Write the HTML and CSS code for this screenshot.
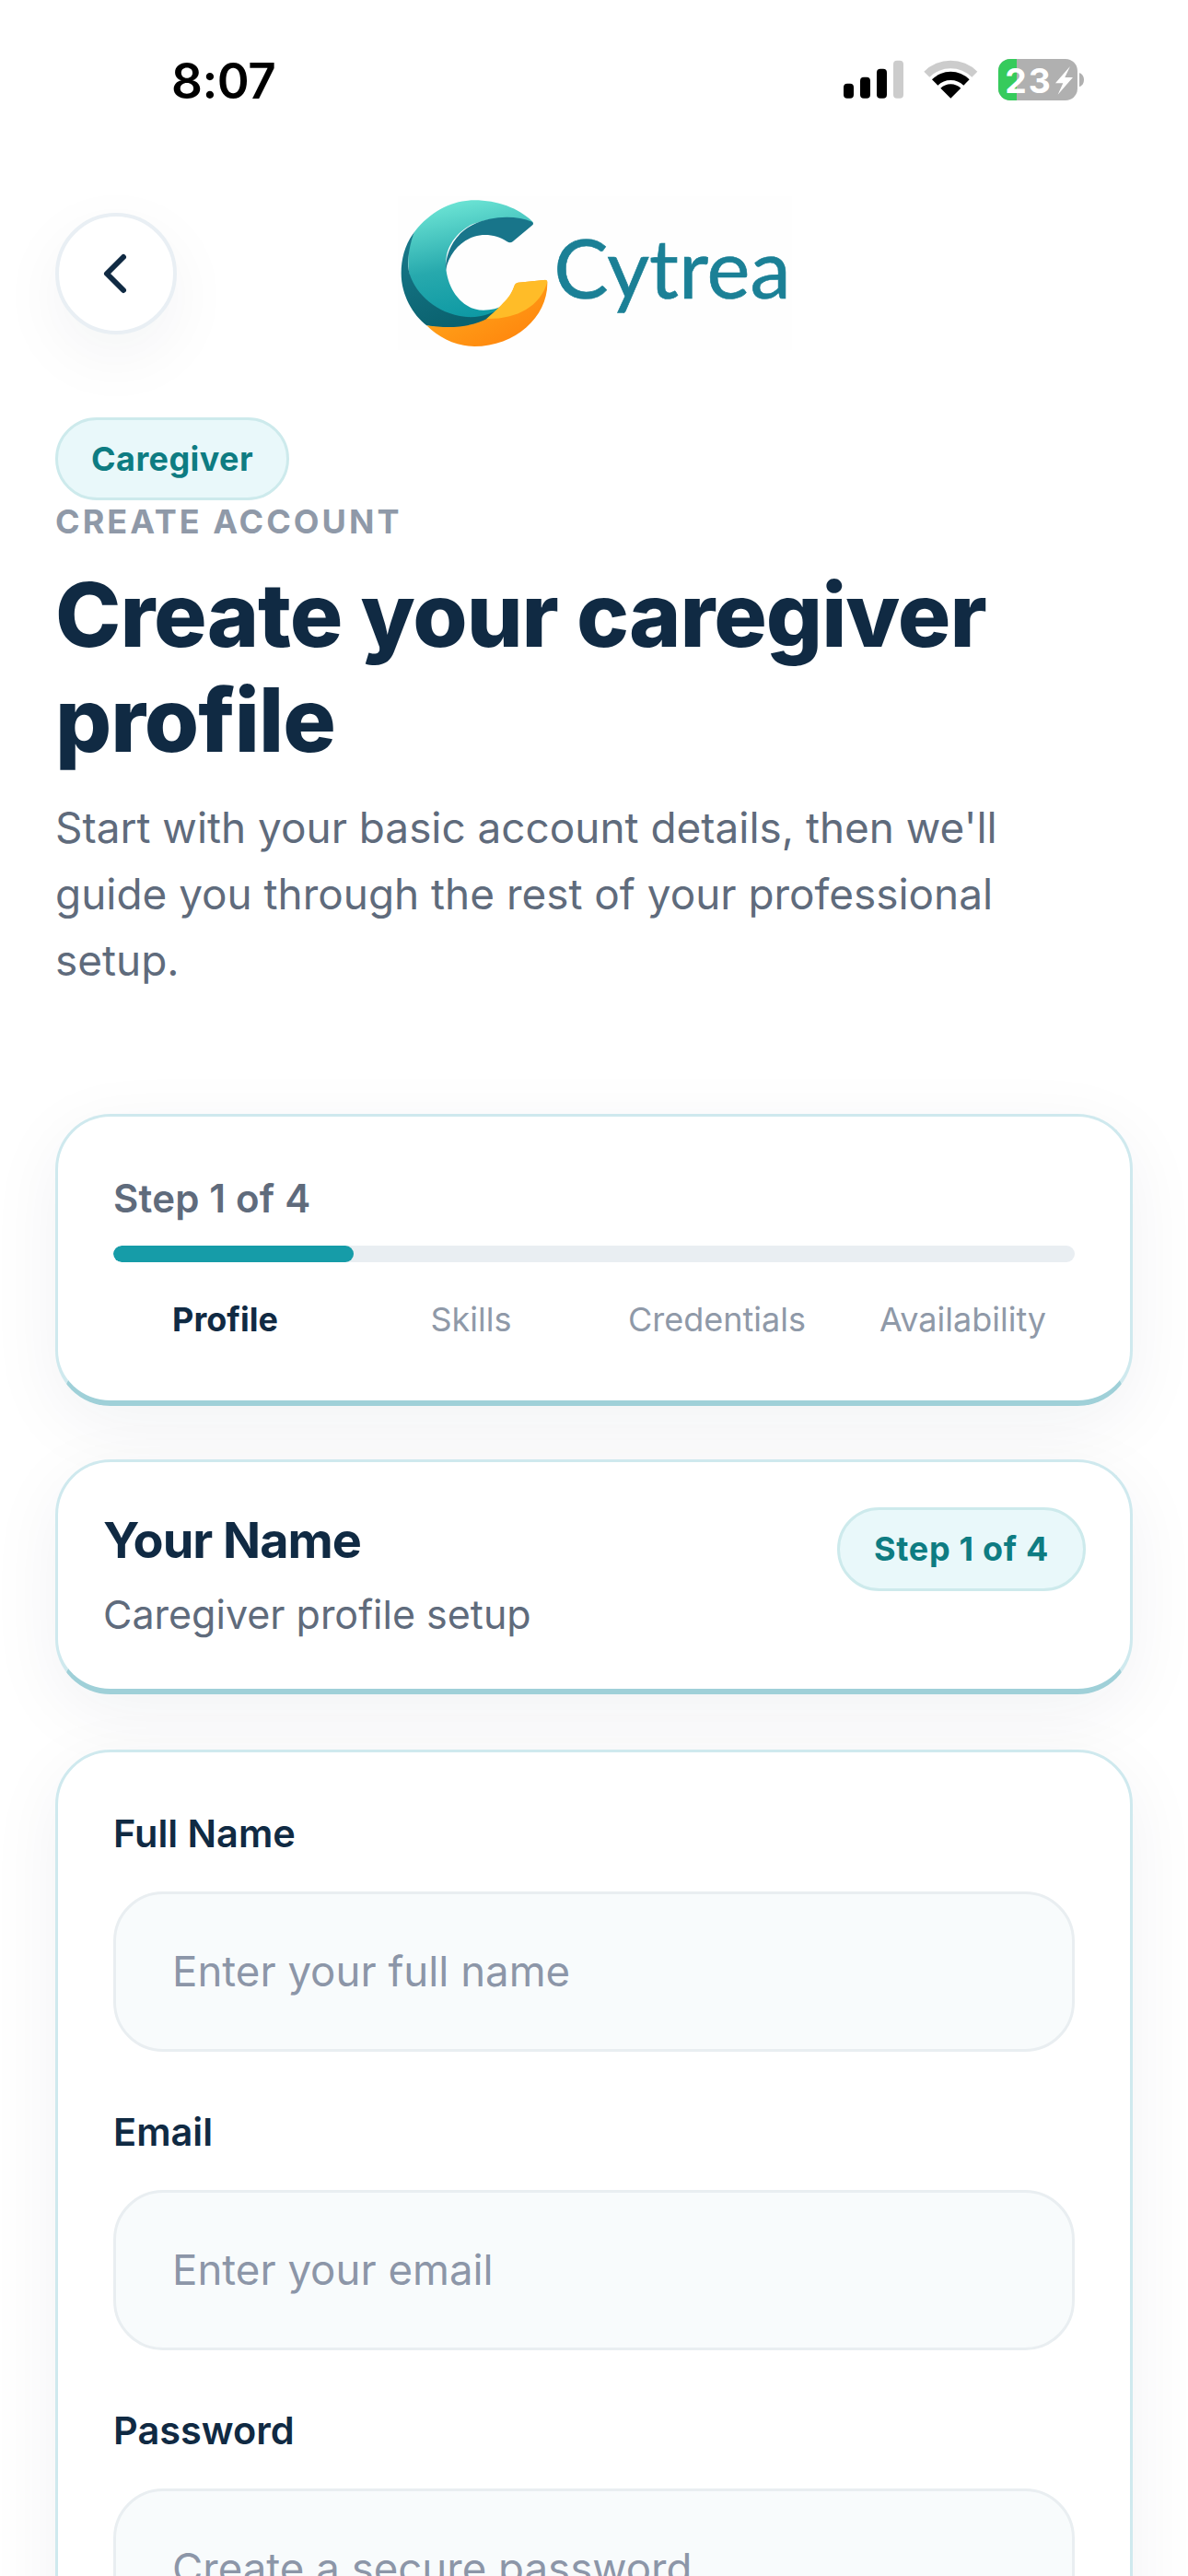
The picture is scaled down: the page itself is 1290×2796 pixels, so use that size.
FILE: index.html
```html
<!DOCTYPE html>
<html lang="en">
<head>
<meta charset="utf-8">
<title>Cytrea - Create your caregiver profile</title>
<link rel="stylesheet" href="styles.css">
</head>
<body>
<div class="screen">
  <div class="status">
    <span class="time">8:07</span>
    <svg class="status-icons" viewBox="0 0 320 90" width="320" height="90">
      <g transform="scale(.3333)">
        <rect x="108" y="152" width="33" height="48" rx="12" fill="#000"/>
        <rect x="162" y="131" width="33" height="69" rx="12" fill="#000"/>
        <rect x="216" y="104" width="33" height="96" rx="12" fill="#000"/>
        <rect x="270" y="77" width="33" height="123" rx="12" fill="#ccc"/>
        <path d="M370 113A123 123 0 0 1 544 113L526 131A98 98 0 0 0 388 131Z" fill="#ccc"/>
        <path d="M396 139A86 86 0 0 1 518 139L499 158A60 60 0 0 0 415 158Z" fill="#000"/>
        <path d="M424 167A47 47 0 0 1 490 167L457 200Z" fill="#000"/>
        <rect x="612" y="72" width="258" height="135" rx="39" fill="#b0b0b0"/>
        <path d="M651 72H672V207H651A39 39 0 0 1 612 168V111A39 39 0 0 1 651 72Z" fill="#36cb5c"/>
        <path d="M876 118C886 120 891 130 891 140C891 150 886 160 876 162Z" fill="#b0b0b0"/>
        <text x="634" y="182" class="batt">23</text>
        <path d="M846 96L798 151H823L806 188L855 132H829Z" fill="#fff"/>
      </g>
    </svg>
  </div>

  <header class="top">
    <button class="back" aria-label="Back">
      <svg viewBox="0 0 48 48" width="48" height="48"><path d="M32 6L14 24L32 42" fill="none" stroke="#102a43" stroke-width="6" stroke-linecap="round" stroke-linejoin="round"/></svg>
    </button>
    <svg class="logo" viewBox="15 0 1440 600" width="480" height="200">
      <defs>
        <linearGradient id="tealG" x1="0.35" y1="0" x2="0.55" y2="1">
          <stop offset="0" stop-color="#6de5d5"/>
          <stop offset=".55" stop-color="#27a9ad"/>
          <stop offset="1" stop-color="#0c98a3"/>
        </linearGradient>
        <linearGradient id="darkG" x1="0" y1="0" x2="0.4" y2="1">
          <stop offset="0" stop-color="#1a7a8c"/>
          <stop offset="1" stop-color="#0a626f"/>
        </linearGradient>
        <linearGradient id="orangeG" x1="0" y1="0" x2="1" y2="1">
          <stop offset="0" stop-color="#ffb020"/>
          <stop offset="1" stop-color="#ff7f0a"/>
        </linearGradient>
      </defs>
      <rect x="95" y="70" width="1285" height="500" fill="#fefefe"/>
      <path d="M150 185C205 115 275 82 345 82C420 82 490 108 533 150Q540 157 533 162C480 135 400 135 340 160C300 178 265 215 255 260C240 340 290 440 375 440C400 440 425 435 445 420L385 470C300 480 250 460 200 425C160 395 130 345 130 290C128 250 135 215 150 185Z" fill="url(#tealG)"/>
      <path d="M533 152Q541 158 533 164L470 217Q462 223 452 217C420 195 380 190 345 200C300 215 262 255 252 310C250 260 275 195 340 162C400 132 480 130 533 152Z" fill="#18758a"/>
      <path d="M150 185C120 225 107 270 107 320C107 390 145 455 190 490C250 505 330 505 385 470L440 425C400 460 330 475 265 450C180 420 120 340 130 270C133 240 140 210 150 185Z" fill="url(#darkG)"/>
      <path d="M190 490C230 530 285 558 345 558C480 558 585 460 583 350Q583 340 572 342L488 350Q478 352 475 362C465 390 450 410 440 425C400 470 330 510 190 490Z" fill="url(#orangeG)"/>
      <path d="M583 348Q583 340 572 342L488 350Q478 352 475 362C465 390 450 410 385 468C480 470 560 430 583 348Z" fill="#ffbc28"/>
      <text x="604" y="402" class="brand" textLength="772" lengthAdjust="spacingAndGlyphs">Cytrea</text>
    </svg>
    <span></span>
  </header>

  <main class="content">
    <span class="pill role">Caregiver</span>
    <div class="eyebrow">CREATE ACCOUNT</div>
    <h1 class="title">Create your caregiver profile</h1>
    <p class="lead">Start with your basic account details, then we'll guide you through the rest of your professional setup.</p>

    <section class="card progress-card">
      <div class="step-text">Step 1 of 4</div>
      <div class="track"><div class="fill" style="width:25%"></div></div>
      <div class="step-labels">
        <span class="active">Profile</span>
        <span>Skills</span>
        <span>Credentials</span>
        <span>Availability</span>
      </div>
    </section>

    <section class="card name-card">
      <div>
        <h2 class="name-title">Your Name</h2>
        <div class="name-sub">Caregiver profile setup</div>
      </div>
      <span class="pill step-pill">Step 1 of 4</span>
    </section>

    <section class="form-card">
      <label class="field-label">Full Name</label>
      <input class="field" type="text" placeholder="Enter your full name">
      <label class="field-label">Email</label>
      <input class="field" type="email" placeholder="Enter your email">
      <label class="field-label">Password</label>
      <input class="field" type="password" placeholder="Create a secure password">
    </section>
  </main>
</div>
</body>
</html>
```
FILE: styles.css
```css
* { box-sizing: border-box; }
html, body { margin: 0; padding: 0; background: #fff; }
body { font-family: Inter, "Liberation Sans", sans-serif; color: #102a43; }
.screen { width: 1290px; height: 2796px; overflow: hidden; background: #fff; }

.status { display: flex; justify-content: space-between; align-items: flex-start; height: 190px; padding: 40px 90px 0 186px; }
.time { font-size: 53px; font-weight: 600; line-height: 96px; color: #000; letter-spacing: -.5px; }
.status-icons { display: block; }
.batt { font-family: Inter, sans-serif; font-weight: 700; font-size: 112px; letter-spacing: 6px; fill: #fff; }

.top { display: grid; grid-template-columns: 132px 1fr 132px; align-items: start; padding: 0 60px; height: 200px; }
.back { width: 132px; height: 132px; margin-top: 41px; padding: 0; border: 4px solid #e9eff4; border-radius: 50%; background: #fff; display: flex; align-items: center; justify-content: center; box-shadow: 0 24px 72px rgba(16, 42, 67, .05); }
.back svg { display: block; }
.logo { display: block; justify-self: center; }
.brand { font-family: Lato, sans-serif; font-size: 268px; fill: #1b8096; stroke: #1b8096; stroke-width: 2px; }

.content { padding: 63px 60px 0; display: flex; flex-direction: column; align-items: flex-start; }
.pill { display: inline-flex; align-items: center; justify-content: center; border-radius: 60px; background: #e9f8fa; border: 3px solid #cdeaec; color: #0e7c82; font-weight: 700; white-space: nowrap; }
.role { width: 254px; height: 90px; font-size: 36px; letter-spacing: .4px; }
.eyebrow { font-size: 36px; line-height: 44px; font-weight: 700; letter-spacing: 3px; color: #8f99a8; margin-top: 1px; }
.title { margin: 22px 0 0; font-size: 96px; line-height: 114px; font-weight: 800; color: #102a43; letter-spacing: -1px; width: 1160px; }
.lead { margin: 25px 0 0; font-size: 45.9px; line-height: 72px; color: #5f6b7c; width: 1120px; }

.card { width: 1170px; border: 3px solid #cfe9ee; border-bottom: 6px solid #9fd0d8; border-radius: 60px; background: #fff; box-shadow: 0 20px 80px rgba(16, 42, 67, .06); }
.progress-card { height: 317px; margin-top: 129.5px; padding: 62px 60px 0; }
.step-text { font-size: 42px; line-height: 54px; font-weight: 600; color: #5f6b7c; letter-spacing: .2px; }
.track { height: 18px; margin-top: 24px; border-radius: 9px; background: #e9eef2; overflow: hidden; }
.fill { height: 100%; border-radius: 9px; background: #169ca8; }
.step-labels { display: grid; grid-template-columns: repeat(4, 1fr); gap: 24px; margin-top: 40px; font-size: 36px; line-height: 44px; color: #8f99a8; text-align: center; }
.step-labels .active { font-weight: 700; color: #102a43; }

.name-card { height: 255px; margin-top: 58px; padding: 50px 48px 0 49px; display: flex; justify-content: space-between; align-items: flex-start; }
.name-title { margin: 0; font-size: 54px; line-height: 70px; font-weight: 700; color: #102a43; letter-spacing: -1px; }
.name-sub { margin-top: 15px; font-size: 43px; line-height: 60px; color: #5f6b7c; }
.step-pill { width: 270px; height: 91px; margin-top: -1px; font-size: 36px; letter-spacing: .7px; }

.form-card { width: 1170px; height: 1200px; margin-top: 60px; padding: 60px 60px 0; border: 3px solid #cfe9ee; border-radius: 60px; background: #fff; box-shadow: 0 20px 80px rgba(16, 42, 67, .06); display: flex; flex-direction: column; }
.field-label { font-size: 41.5px; line-height: 56px; font-weight: 600; color: #102a43; }
.field { display: block; width: 100%; height: 174px; margin: 35px 0 59px; padding: 0 61px; border: 3px solid #e9eef1; border-radius: 54px; background: #f8fbfc; font-family: Inter, sans-serif; font-size: 45.6px; color: #102a43; flex: none; }
.field::placeholder { color: #8c96a8; opacity: 1; }
```
